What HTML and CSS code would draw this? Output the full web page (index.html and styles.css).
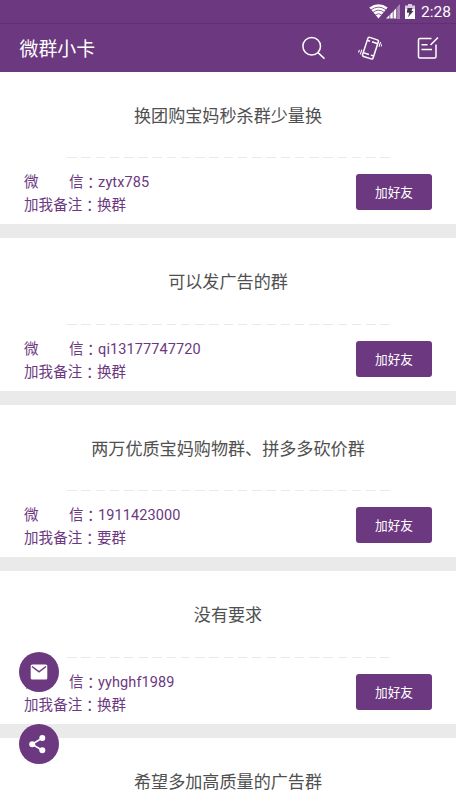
FILE: index.html
```html
<!DOCTYPE html>
<html lang="zh-CN">
<head>
<meta charset="utf-8">
<title>微群小卡</title>
<link rel="stylesheet" href="styles.css">
</head>
<body>
<div class="statusbar">
  <svg class="wifi" width="19" height="15" viewBox="0 0 19 15"><path d="M9.5 14.6 0.3 3.4Q9.5-3 18.7 3.4Z" fill="#fff"/><path d="M2 5.8Q9.500 0.500 17 5.800M4 8.300Q9.500 4 15 8.300M6.200 10.900Q9.500 8.500 12.800 10.900" fill="none" stroke="#6c387f" stroke-width=".8"/></svg>
  <svg class="signal" width="15" height="15" viewBox="0 0 15 15"><path d="M14 0.500V14.500H0Z" fill="#fff"/><path d="M10.800 3.700 14 .5V14.500H10.800Z" fill="#a883b3"/><path d="M3.800 9V15M7.200 6V15M10.600 3V15" stroke="#6c387f" stroke-width=".8"/></svg>
  <svg class="battery" width="10" height="15" viewBox="0 0 10 15"><path d="M3 0H7V1.500H10V15H0V1.500H3Z" fill="#d9c9de"/><path d="M0 5H10V15H0Z" fill="#fff"/><path d="M2.500 4H7.500L6.500 7H8.500L3 13.200 4.300 8.800H1.800Z" fill="#4b3155"/></svg>
  <span class="clock">2:28</span>
</div>
<header class="appbar">
  <h1>微群小卡</h1>
  <nav class="actions">
    <svg width="24" height="24" viewBox="0 0 24 24"><circle cx="10.700" cy="10.300" r="8.800"/><path d="M17 16.600 23.500 22.600"/></svg>
    <svg width="24" height="24" viewBox="0 0 24 24"><g transform="rotate(18 12 12)"><rect x="7" y="2" width="11" height="20" rx="1.500"/><path d="M7 5.500H10M12 5.500H18M7 18.500H13M15 18.500H18"/><path d="M20.200 3V8M22.300 4V7M4.700 16V21M2.500 17V20" stroke-width="1.100"/></g></svg>
    <svg width="24" height="24" viewBox="0 0 24 24"><path d="M16.500 2.500H5Q3.500 2.500 3.500 4V20.500Q3.500 22 5 22H19.500Q21 22 21 20.500V8.500M15.500 9 23 1.500M6.500 8.800H12.500M6.500 13.500H17"/></svg>
  </nav>
</header>
<main>
  <section class="card">
    <h2>换团购宝妈秒杀群少量换</h2>
    <div class="dashes"></div>
    <div class="info">
      <div><p><span class="wx"><i>微</i><i>信</i></span><b>：</b>zytx785</p><p>加我备注<b>：</b>换群</p></div>
      <button>加好友</button>
    </div>
  </section>
  <section class="card">
    <h2>可以发广告的群</h2>
    <div class="dashes"></div>
    <div class="info">
      <div><p><span class="wx"><i>微</i><i>信</i></span><b>：</b>qi13177747720</p><p>加我备注<b>：</b>换群</p></div>
      <button>加好友</button>
    </div>
  </section>
  <section class="card">
    <h2>两万优质宝妈购物群、拼多多砍价群</h2>
    <div class="dashes"></div>
    <div class="info">
      <div><p><span class="wx"><i>微</i><i>信</i></span><b>：</b>1911423000</p><p>加我备注<b>：</b>要群</p></div>
      <button>加好友</button>
    </div>
  </section>
  <section class="card">
    <h2>没有要求</h2>
    <div class="dashes"></div>
    <div class="info">
      <div><p><span class="wx"><i>微</i><i>信</i></span><b>：</b>yyhghf1989</p><p>加我备注<b>：</b>换群</p></div>
      <button>加好友</button>
    </div>
  </section>
  <section class="card partial">
    <h2>希望多加高质量的广告群</h2>
  </section>
</main>
<div class="fabs">
  <div class="fab"><svg width="20" height="20" viewBox="0 0 20 20"><rect x="1.700" y="2.500" width="16.600" height="15" rx="1.500"/><path d="M3 4.500 10 9.800 17 4.500" class="fold"/></svg></div>
  <div class="fab"><svg width="20" height="20" viewBox="0 0 20 20"><path d="M13.300 4 3 10.200 13.300 16.300" class="link"/><circle cx="13.300" cy="3.900" r="3"/><circle cx="3.200" cy="10.200" r="3"/><circle cx="13.300" cy="16.300" r="3"/></svg></div>
</div>
</body>
</html>
```
FILE: styles.css
```css
* {
  box-sizing: border-box;
  margin: 0;
  padding: 0;
}

body {
  height: 811px;
  overflow: hidden;
  background: #fff;
  font-family: Roboto, "Noto Sans CJK SC", sans-serif;
}

.statusbar {
  display: flex;
  align-items: center;
  justify-content: flex-end;
  height: 24px;
  padding-right: 5px;
  background: #6c387f;
  border-bottom: 1px solid #60316f;
}

.signal {
  margin-left: -2px;
}

.battery {
  margin: 0 6px 0 4px;
}

.clock {
  color: #fff;
  font-size: 15.500px;
  line-height: 24px;
  padding-top: 1px;
}

.appbar {
  display: flex;
  align-items: center;
  justify-content: space-between;
  height: 47.500px;
  padding: 0 17px 0 19.500px;
  background: #6c387f;
}

.appbar h1 {
  padding-top: 4px;
  color: #fff;
  font-size: 18.900px;
  font-weight: 400;
  line-height: 28px;
}

.actions {
  display: flex;
  gap: 33px;
}

.actions svg {
  fill: none;
  stroke: #fff;
  stroke-width: 1.500;
}

.card {
  height: 166.600px;
  border-bottom: 14.300px solid #eaeaea;
}

.partial {
  height: 73px;
  border-bottom: 0;
  overflow: hidden;
}

.card h2 {
  height: 85.500px;
  color: #505050;
  font-size: 17.100px;
  font-weight: 400;
  line-height: 88.500px;
  text-align: center;
}

.dashes {
  height: 1px;
  margin: 0 66px 0 67px;
  background: repeating-linear-gradient(90deg, #e9e8ec 0 9.500px, transparent 9.500px 14.250px);
}

.info {
  display: flex;
  justify-content: space-between;
  padding: 13px 24px 0;
  color: #6c387f;
  font-size: 14.500px;
}

.info p {
  display: flex;
  height: 23px;
  line-height: 24.500px;
  letter-spacing: .1px;
}

.info i,
.info b {
  font-style: normal;
  font-weight: 400;
}

.info b {
  margin-top: -1px;
  font-family: "Noto Sans CJK TC", sans-serif;
}

.wx {
  display: flex;
  justify-content: space-between;
  width: 59.500px;
}

.info button {
  width: 76px;
  height: 36px;
  margin-top: 3.300px;
  border: 0;
  border-radius: 3px;
  background: #6c387f;
  color: #fff;
  font: 12.700px/37px Roboto, "Noto Sans CJK SC", sans-serif;
}

.fabs {
  position: absolute;
  left: 19px;
  top: 652px;
  display: grid;
  gap: 31.500px;
}

.fab {
  display: grid;
  place-items: center;
  width: 40px;
  height: 40px;
  border-radius: 50%;
  background: #6c387f;
}

.fab svg {
  fill: #fff;
}

.fold {
  fill: none;
  stroke: #6c387f;
  stroke-width: 1.500;
}

.link {
  fill: none;
  stroke: #fff;
  stroke-width: 1.600;
}
```
